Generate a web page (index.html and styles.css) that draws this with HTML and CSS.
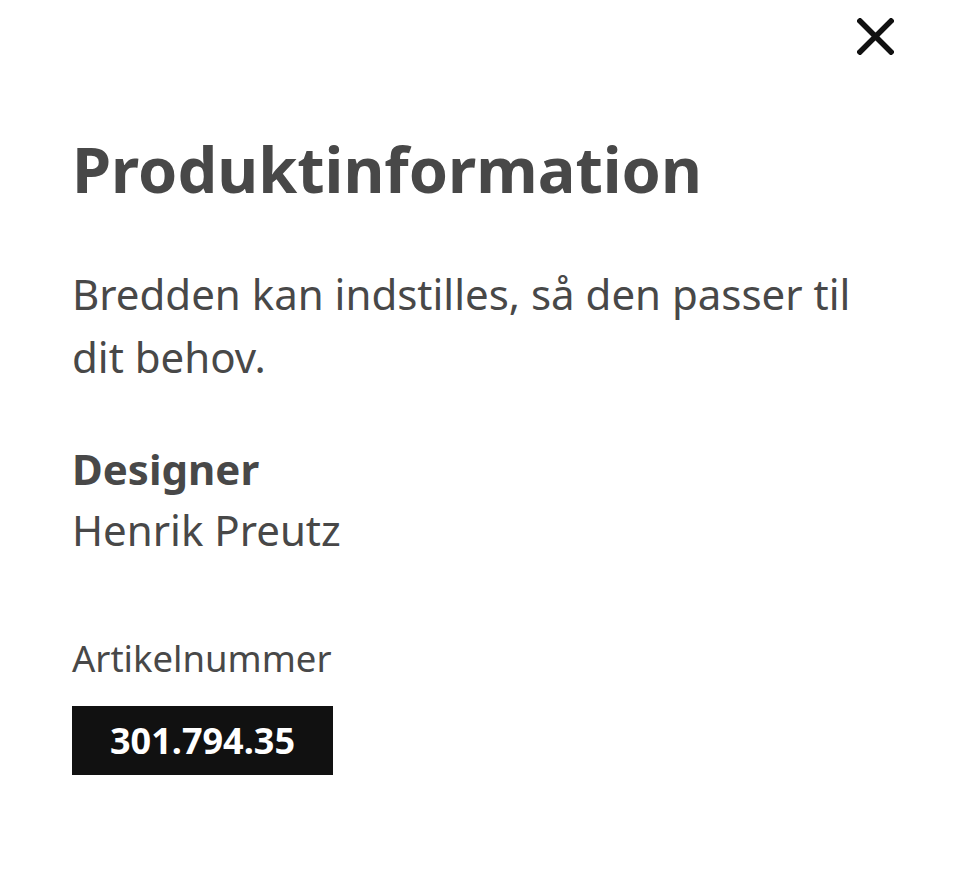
FILE: index.html
```html
<!DOCTYPE html>
<html lang="da">
<head>
<meta charset="utf-8">
<title>Produktinformation</title>
<link rel="stylesheet" href="styles.css">
</head>
<body>
<div class="sheet">
  <div class="sheet-top">
    <button class="close" aria-label="Luk">
      <svg viewBox="0 0 37 37" width="37" height="37" aria-hidden="true">
        <path d="M3 3 L34 34 M34 3 L3 34" stroke="#111" stroke-width="5.5" stroke-linecap="square" fill="none"/>
      </svg>
    </button>
  </div>
  <div class="sheet-body">
    <h1 class="title">Produktinformation</h1>
    <p class="desc">Bredden kan indstilles, så den passer til dit behov.</p>
    <div class="designer">
      <h2 class="designer-label">Designer</h2>
      <p class="designer-name">Henrik Preutz</p>
    </div>
    <div class="article">
      <p class="article-label">Artikelnummer</p>
      <span class="article-number">301.794.35</span>
    </div>
  </div>
</div>
</body>
</html>
```

FILE: styles.css
```css
html, body {
  margin: 0;
  padding: 0;
  background: #fff;
}
body {
  font-family: "Noto Sans", "Open Sans", sans-serif;
  color: #484848;
}
.sheet {
  padding: 0 66px 0 72px;
}
.sheet-top {
  display: flex;
  justify-content: flex-end;
  padding-top: 18px;
}
.close {
  border: 0;
  background: none;
  padding: 0;
  margin: 0;
  width: 37px;
  height: 37px;
  display: block;
  cursor: pointer;
}
.close svg {
  display: block;
}
.sheet-body {
  display: flex;
  flex-direction: column;
  align-items: flex-start;
}
.title {
  margin: 74px 0 0 0;
  font-size: 63px;
  line-height: 80px;
  font-weight: 700;
}
.desc {
  margin: 53px 0 0 0;
  font-size: 42px;
  line-height: 63px;
  font-weight: 400;
}
.designer {
  margin-top: 50px;
}
.designer-label {
  margin: 0;
  font-size: 42px;
  line-height: 61px;
  font-weight: 700;
}
.designer-name {
  margin: 0;
  font-size: 42px;
  line-height: 61px;
  font-weight: 400;
}
.article {
  margin-top: 72px;
  display: flex;
  flex-direction: column;
  align-items: flex-start;
}
.article-label {
  margin: 0;
  font-size: 36.5px;
  line-height: 53px;
}
.article-number {
  margin-top: 21px;
  display: block;
  background: #111;
  color: #fff;
  font-size: 36px;
  line-height: 49px;
  font-weight: 700;
  padding: 10px 38px;
}
```
